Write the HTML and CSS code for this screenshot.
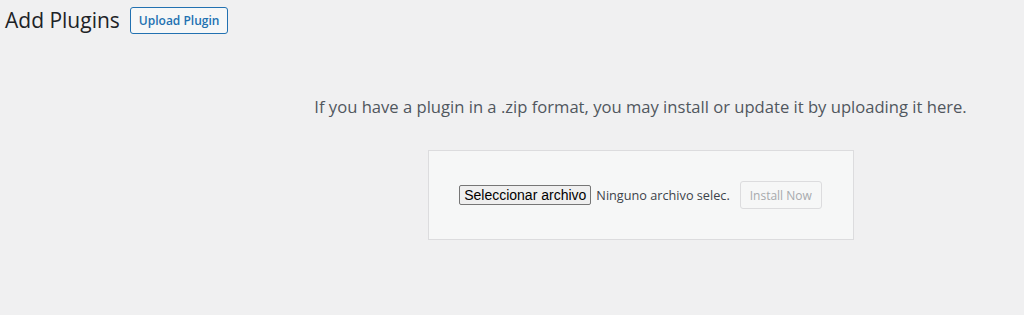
FILE: index.html
```html
<!DOCTYPE html>
<html lang="en">
<head>
    <meta charset="UTF-8">
    <title>Add Plugins</title>
    <link rel="stylesheet" href="styles.css">
</head>
<body>
<div class="wrap">
    <div class="page-header">
        <h1>Add Plugins</h1>
        <button class="page-title-action">Upload Plugin</button>
    </div>

    <!-- upload form -->
    <div class="upload-plugin">
        <p class="install-help">If you have a plugin in a .zip format, you may install or update it by uploading it here.</p>
        <form class="wp-upload-form">
            <span class="file-button">Seleccionar archivo</span>
            <span class="file-name">Ninguno archivo selec.</span>
            <button type="button" class="install-button" disabled>Install Now</button>
        </form>
    </div>
</div>
</body>
</html>
```

FILE: styles.css
```css
body {
    margin: 0;
    background: #f0f0f1;
    color: #3c434a;
    font-family: "Open Sans", sans-serif;
}

.page-header {
    display: flex;
    align-items: center;
    padding: 6px 0 0 5px;
}
.page-header h1 {
    margin: 0;
    font-size: 21px;
    font-weight: 400;
    color: #1d2327;
    line-height: 29px;
}
.page-title-action {
    margin-left: 10px;
    height: 27px;
    padding: 0 8px;
    border: 1px solid #2271b1;
    border-radius: 3px;
    background: #f6f7f7;
    color: #2271b1;
    font-family: "Open Sans", sans-serif;
    font-size: 12px;
    font-weight: 600;
}

.upload-plugin {
    margin-left: 257px;
    text-align: center;
}
.install-help {
    margin: 0;
    padding-top: 60px;
    font-size: 16.6px;
    line-height: 24px;
    color: #50575e;
}

.wp-upload-form {
    display: flex;
    align-items: center;
    justify-content: center;
    width: 424px;
    height: 88px;
    margin: 31px auto 0;
    border: 1px solid #dcdcde;
    background: #f6f7f7;
}
.file-button {
    height: 18px;
    padding: 0 4px;
    border: 1px solid #767676;
    border-radius: 2px;
    background: #efefef;
    color: #000;
    font-family: "Liberation Sans", Arial, sans-serif;
    font-size: 14px;
    line-height: 18px;
}
.file-name {
    margin-left: 5px;
    font-size: 12.7px;
    color: #3c434a;
}
.install-button {
    margin-left: 10px;
    height: 28px;
    padding: 0 9px;
    border: 1px solid #dcdcde;
    border-radius: 3px;
    background: #f6f7f7;
    color: #a7aaad;
    font-family: "Open Sans", sans-serif;
    font-size: 12px;
}
```
